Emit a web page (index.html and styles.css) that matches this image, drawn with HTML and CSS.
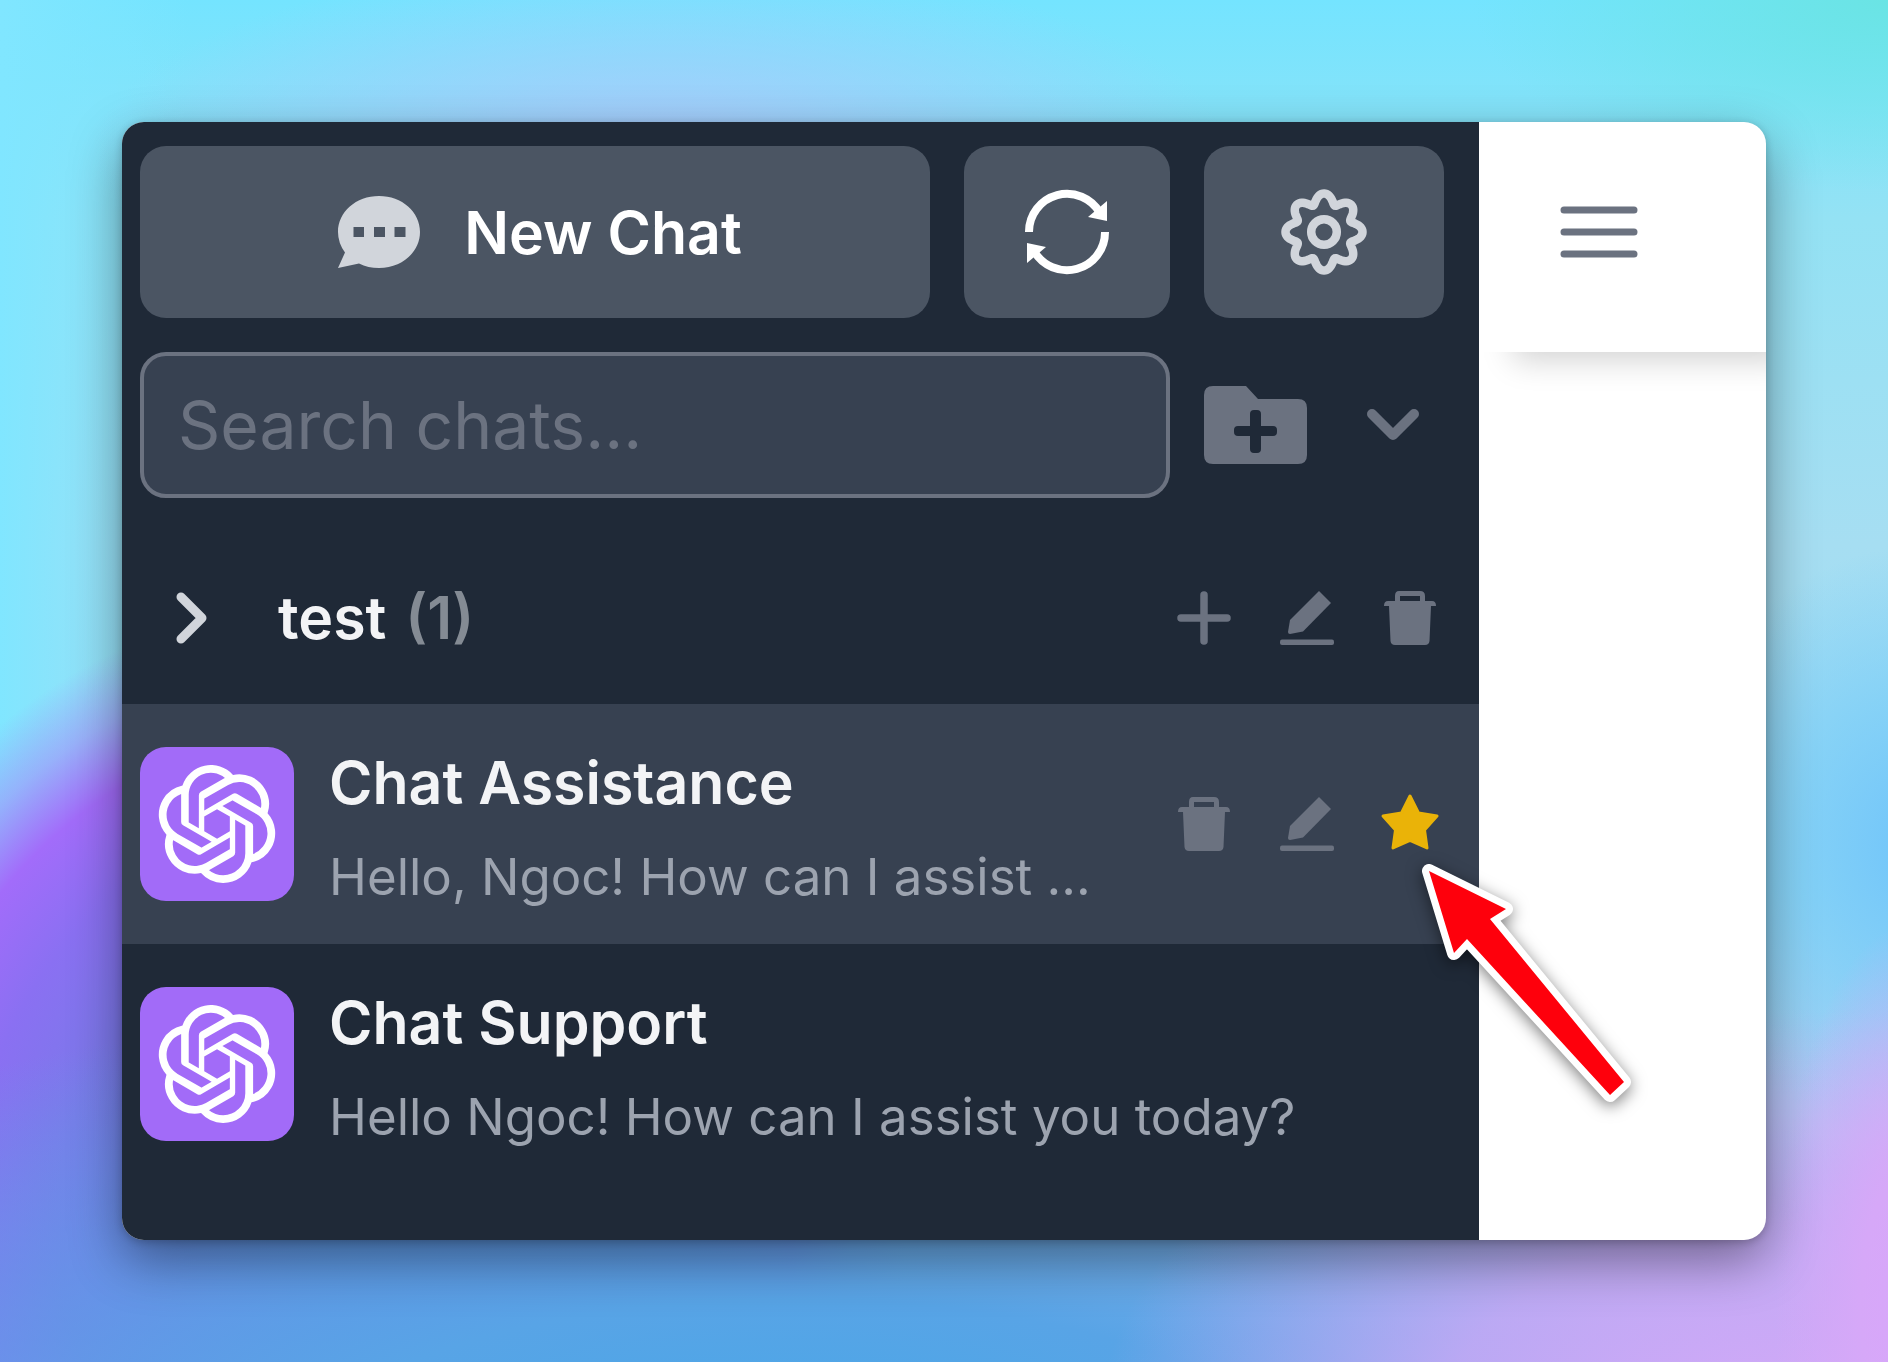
FILE: index.html
```html
<!DOCTYPE html>
<html lang="en">
<head>
<meta charset="utf-8">
<meta name="viewport" content="width=device-width, initial-scale=1">
<title>Chats</title>
<link rel="stylesheet" href="styles.css">
</head>
<body>
<svg class="sprite" aria-hidden="true">
  <symbol id="edit" viewBox="0 0 54 54">
    <path d="M39 0 51 12 23 40.500 10 43Q8 43 8 41L10 29Z"/>
    <rect x="0" y="48.500" width="54" height="5.500" rx="2"/>
  </symbol>
  <symbol id="trash" viewBox="0 0 54 54">
    <path fill-rule="evenodd" d="M16 0H37Q42 0 42 5V10H49Q53 10 53 15H48L46.500 50Q46 54 42 54H12Q8 54 7.500 50L6 15H1Q1 10 5 10H12V5Q12 0 16 0ZM17 5V10H37V5Z"/>
  </symbol>
  <symbol id="openai" viewBox="0 0 24 24">
    <path d="M22.2819 9.8211a5.9847 5.9847 0 0 0-.5157-4.9108 6.0462 6.0462 0 0 0-6.5098-2.9A6.0651 6.0651 0 0 0 4.9807 4.1818a5.9847 5.9847 0 0 0-3.9977 2.9 6.0462 6.0462 0 0 0 .7427 7.0966 5.98 5.98 0 0 0 .511 4.9107 6.051 6.051 0 0 0 6.5146 2.9001A5.9847 5.9847 0 0 0 13.2599 24a6.0557 6.0557 0 0 0 5.7718-4.2058 5.9894 5.9894 0 0 0 3.9977-2.9001 6.0557 6.0557 0 0 0-.7475-7.0729zm-9.022 12.6081a4.4755 4.4755 0 0 1-2.8764-1.0408l.1419-.0804 4.7783-2.7582a.7948.7948 0 0 0 .3927-.6813v-6.7369l2.02 1.1686a.071.071 0 0 1 .038.052v5.5826a4.504 4.504 0 0 1-4.4945 4.4944zm-9.6607-4.1254a4.4708 4.4708 0 0 1-.5346-3.0137l.142.0852 4.783 2.7582a.7712.7712 0 0 0 .7806 0l5.8428-3.3685v2.3324a.0804.0804 0 0 1-.0332.0615L9.74 19.9502a4.4992 4.4992 0 0 1-6.1408-1.6464zM2.3408 7.8956a4.485 4.485 0 0 1 2.3655-1.9728V11.6a.7664.7664 0 0 0 .3879.6765l5.8144 3.3543-2.0201 1.1685a.0757.0757 0 0 1-.071 0l-4.8303-2.7865A4.504 4.504 0 0 1 2.3408 7.872zm16.5963 3.8558L13.1038 8.364 15.1192 7.2a.0757.0757 0 0 1 .071 0l4.8303 2.7913a4.4944 4.4944 0 0 1-.6765 8.1042v-5.6772a.79.79 0 0 0-.407-.667zm2.0107-3.0231l-.142-.0852-4.7735-2.7818a.7759.7759 0 0 0-.7854 0L9.409 9.2297V6.8974a.0662.0662 0 0 1 .0284-.0615l4.8303-2.7866a4.4992 4.4992 0 0 1 6.6802 4.66zM8.3065 12.863l-2.02-1.1638a.0804.0804 0 0 1-.038-.0567V6.0742a4.4992 4.4992 0 0 1 7.3757-3.4537l-.142.0805L8.704 5.459a.7948.7948 0 0 0-.3927.6813zm1.0976-2.3654l2.602-1.4998 2.6069 1.4998v2.9994l-2.5974 1.4997-2.6067-1.4997Z"/>
  </symbol>
</svg>

<div class="window">
  <aside class="sidebar">
    <div class="toolbar">
      <button class="btn btn-new" type="button">
        <svg class="icon-bubble" viewBox="0 0 82 72" aria-hidden="true"><path fill-rule="evenodd" d="M41 0C64 0 82 16 82 36S64 72 41 72Q30 72 21 67.500L0 72 7 56.500Q0 47 0 36C0 16 18 0 41 0ZM15.500 31V41H26V31ZM36 31V41H47V31ZM56.500 31V41H67.500V31Z"/></svg>
        <span>New Chat</span>
      </button>
      <button class="btn btn-refresh" type="button" aria-label="Refresh">
        <svg class="icon-lg" viewBox="0 0 86 86" aria-hidden="true"><g fill="none" stroke="currentColor" stroke-width="8"><path d="M5 43A38 38 0 0 1 76 24"/><path d="M81 43A38 38 0 0 1 10 62"/></g><path d="M83 12V32L64 28Z"/><path d="M3 74V54L22 58Z"/></svg>
      </button>
      <button class="btn btn-settings" type="button" aria-label="Settings">
        <svg class="icon-lg gear" viewBox="0 0 86 86" fill="none" stroke="currentColor" stroke-width="8.500" aria-hidden="true"><circle cx="43" cy="43" r="12.800"/><path id="gear" d=""/></svg>
      </button>
    </div>

    <div class="search-row">
      <input class="search" type="text" placeholder="Search chats..." aria-label="Search chats">
      <button class="plain folder" type="button" aria-label="New folder">
        <svg viewBox="0 0 103 78" aria-hidden="true"><path fill-rule="evenodd" d="M9 0H42L54 13H94Q103 13 103 22V69Q103 78 94 78H9Q0 78 0 69V9Q0 0 9 0ZM50 24Q46 24 46 28V40H34Q30 40 30 44V46Q30 50 34 50H46V63Q46 67 50 67H53Q57 67 57 63V50H69Q73 50 73 46V44Q73 40 69 40H57V28Q57 24 53 24Z"/></svg>
      </button>
      <button class="plain sort" type="button" aria-label="Sort">
        <svg viewBox="0 0 52 32" aria-hidden="true"><path d="M5 5 26 26 47 5" fill="none" stroke="currentColor" stroke-width="10" stroke-linecap="round" stroke-linejoin="round"/></svg>
      </button>
    </div>

    <div class="group">
      <button class="plain expand" type="button" aria-label="Expand folder">
        <svg viewBox="0 0 32 52" aria-hidden="true"><path d="M5 5 26 26 5 47" fill="none" stroke="currentColor" stroke-width="9" stroke-linecap="round" stroke-linejoin="round"/></svg>
      </button>
      <h2 class="title">test <span class="count">(1)</span></h2>
      <div class="actions">
        <button class="plain" type="button" aria-label="Add chat"><svg class="icon" viewBox="0 0 54 54" aria-hidden="true"><path d="M27 4V50M4 27H50" stroke="currentColor" stroke-width="7.500" stroke-linecap="round"/></svg></button>
        <button class="plain" type="button" aria-label="Rename folder"><svg class="icon"><use href="#edit"/></svg></button>
        <button class="plain" type="button" aria-label="Delete folder"><svg class="icon"><use href="#trash"/></svg></button>
      </div>
    </div>

    <div class="chat active">
      <div class="avatar"><svg><use href="#openai"/></svg></div>
      <div class="chat-text">
        <h3 class="title">Chat Assistance</h3>
        <p class="preview">Hello, Ngoc! How can I assist ...</p>
      </div>
      <div class="actions">
        <button class="plain" type="button" aria-label="Delete chat"><svg class="icon"><use href="#trash"/></svg></button>
        <button class="plain" type="button" aria-label="Rename chat"><svg class="icon"><use href="#edit"/></svg></button>
        <button class="plain star" type="button" aria-label="Favorite chat">
          <svg class="icon" viewBox="0 1 54 54" aria-hidden="true"><path d="M27 0 35.500 17 54 20 41.500 34 44 52 27 44.500 10 52 12.500 34 0 20 18.500 17Z" stroke="currentColor" stroke-width="3" stroke-linejoin="round"/></svg>
          <svg class="pointer" viewBox="0 0 212 242" aria-hidden="true"><path d="M10 10 87 48 71 58 205 221 191 234 48 78 35 92Z"/></svg>
        </button>
      </div>
    </div>

    <div class="chat">
      <div class="avatar"><svg><use href="#openai"/></svg></div>
      <div class="chat-text">
        <h3 class="title">Chat Support</h3>
        <p class="preview">Hello Ngoc! How can I assist you today?</p>
      </div>
    </div>
  </aside>

  <main class="content">
    <header class="topbar">
      <button class="plain" type="button" aria-label="Menu">
        <svg class="menu" viewBox="0 0 78 52" aria-hidden="true"><path d="M4 4H74M4 26H74M4 48H74" stroke="currentColor" stroke-width="7" stroke-linecap="round"/></svg>
      </button>
    </header>
  </main>
</div>
<script src="gear.js"></script>
</body>
</html>
```
FILE: gear.js
```js
// Traces the scalloped rim of the settings gear: eight lobes around the hub.
(function () {
  var points = [];
  for (var i = 0; i < 240; i++) {
    var a = i / 240 * Math.PI * 2;
    var wave = Math.cos(8 * a);
    var r = 33.5 + 5 * wave;
    // Shift the angle so that the lobes are round and the valleys narrow.
    var t = a + 0.035 * Math.sin(8 * a);
    points.push((43 + r * Math.sin(t)).toFixed(2) + ' ' + (43 - r * Math.cos(t)).toFixed(2));
  }
  document.getElementById('gear').setAttribute('d', 'M' + points.join('L') + 'Z');
})();
```
FILE: styles.css
```css
* { box-sizing: border-box; }

body {
  margin: 0;
  min-height: 100vh;
  padding: 122px;
  display: flex;
  font-family: Inter, "Liberation Sans", sans-serif;
  background:
    radial-gradient(ellipse 7% 28% at 101% 96%, #d8a6fa 0%, #d6a8f8 35%, #d6a8f800 100%),
    radial-gradient(ellipse 36% 32% at 94% 106%, #d4a8f8 0%, #cca8f6cc 50%, #c0a8f400 100%),
    radial-gradient(ellipse 75% 36% at 42% 108%, #46a8e8 0%, #58a4e6 35%, #609ee800 100%),
    radial-gradient(ellipse 30% 46% at 18% 90%, #6c84e6 0%, #7c78ea 50%, #8a70f2 66%, #a26cfa 80%, #a090fa99 90%, #90c0fa00 100%),
    radial-gradient(ellipse 14% 22% at 102% 62%, #70c4fa 0%, #78ccf8aa 50%, #80d8f000 100%),
    radial-gradient(ellipse 30% 14% at 35% 11%, #a8cafc 0%, #a8cafc00 100%),
    radial-gradient(ellipse 22% 14% at 100% 0%, #6ae4e4 0%, #6ae4e400 100%),
    linear-gradient(90deg, #80e6ff 0%, #80e6ff00 10%),
    linear-gradient(180deg, #74e4ff 0%, #94e2f4 16%, #a6def2 40%, #9cdcf4 65%, #b8bcf2 100%);
}

.sprite { display: none; }
svg { display: block; fill: currentColor; }
h2, h3, p { margin: 0; }

.window {
  flex: 1;
  min-width: 0;
  display: flex;
  border-radius: 22px;
  background: #fff;
  box-shadow: 0 20px 52px rgba(0, 0, 0, .42), 0 2px 8px rgba(0, 0, 0, .2);
}

.sidebar {
  flex: 1;
  min-width: 0;
  border-radius: 22px 0 0 22px;
  background: #1f2937;
  color: #6b7280;
}

.toolbar, .search-row {
  display: flex;
  gap: 34px;
  padding: 24px 35px 0 18px;
}
.search-row { padding-top: 34px; align-items: center; }

button { font: inherit; cursor: pointer; border: 0; }
.plain { padding: 0; background: none; color: inherit; }

.btn {
  height: 172px;
  display: flex;
  align-items: center;
  justify-content: center;
  border-radius: 26px;
  background: #4b5563;
  color: #d1d5db;
}
.btn-new { flex: 1; gap: 44px; padding: 0 0 0 10px; font-size: 59px; font-weight: 600; }
.btn-new span { color: #fff; }
.btn-refresh { width: 206px; color: #fff; }
.btn-settings { width: 240px; }
.icon-bubble { width: 82px; height: 72px; }
.icon-lg { width: 86px; height: 86px; }
.gear { fill: none; }

.search {
  flex: 1;
  min-width: 0;
  height: 146px;
  padding: 0 34px;
  border: 4px solid #6b7280;
  border-radius: 26px;
  background: #374151;
  color: #fff;
  font: 400 66px Inter, "Liberation Sans", sans-serif;
}
.search::placeholder { color: #6b7280; opacity: 1; }
.folder svg { width: 103px; height: 78px; }
.sort { width: 103px; }
.sort svg { width: 52px; height: 32px; margin: 0 auto; }

.group {
  display: flex;
  align-items: center;
  height: 172px;
  margin-top: 34px;
  padding: 0 35px 0 54px;
}
.expand { width: 102px; color: #d1d5db; }
.expand svg { width: 32px; height: 52px; }

.title {
  overflow: hidden;
  color: #f3f4f6;
  font-size: 59px;
  font-weight: 600;
  line-height: 72px;
  white-space: nowrap;
}
.count { margin-left: 4px; color: #848b94; }

.actions { display: flex; gap: 49px; margin-left: auto; padding-right: 7px; }
.icon { width: 54px; height: 54px; overflow: visible; }

.chat {
  display: flex;
  align-items: center;
  height: 240px;
  padding: 0 35px 0 18px;
}
.active { background: #374151; }
.avatar {
  flex: none;
  padding: 18px;
  margin-right: 35px;
  border-radius: 26px;
  background: #a26bf8;
  color: #fff;
}
.avatar svg { width: 118px; height: 118px; }
.chat-text { padding-top: 10px; }
.preview {
  margin-top: 24px;
  color: #9ca3af;
  font-size: 51px;
  line-height: 68px;
  white-space: nowrap;
}

.star { position: relative; color: #eab308; }
.pointer {
  position: absolute;
  left: 36px;
  top: 64px;
  width: 212px;
  height: 242px;
  overflow: visible;
  fill: #fe000c;
  stroke: #fff;
  stroke-width: 14px;
  stroke-linejoin: round;
  paint-order: stroke;
  filter: drop-shadow(0 4px 8px rgba(0, 0, 0, .5));
  pointer-events: none;
}

.content { width: 287px; overflow: hidden; border-radius: 0 22px 22px 0; }
.topbar {
  height: 230px;
  display: flex;
  align-items: center;
  padding: 0 81px 10px;
  color: #6b7280;
  box-shadow: 28px 14px 30px -6px rgba(0, 0, 0, .18);
}
.menu { width: 78px; height: 52px; }
```
